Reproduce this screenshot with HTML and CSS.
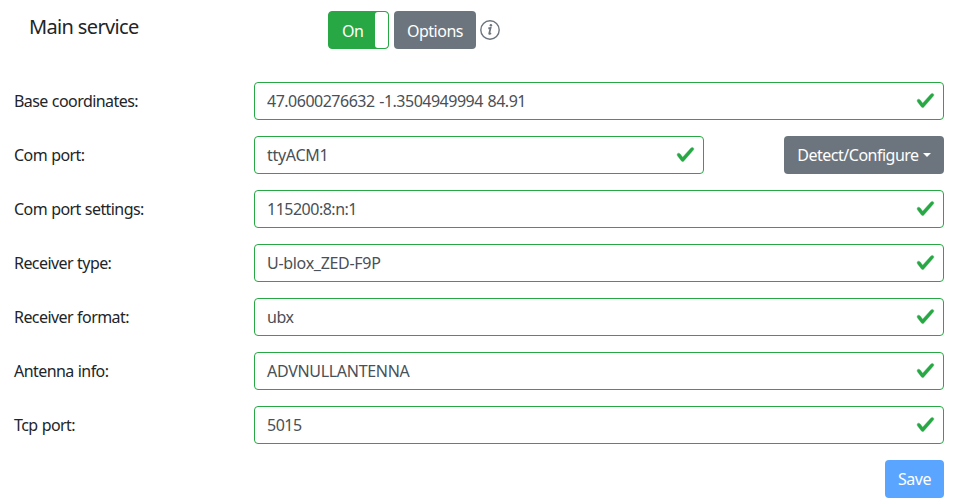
FILE: index.html
```html
<!DOCTYPE html>
<html lang="en">
<head>
<meta charset="utf-8">
<title>Main service</title>
<link rel="stylesheet" href="styles.css">
</head>
<body>
<header class="header">
  <h1 class="title">Main service</h1>
  <div class="toggle"><span class="toggle-on">On</span><span class="toggle-handle"></span></div>
  <button class="btn options">Options</button>
  <svg class="info" viewBox="0 0 20 20"><circle cx="10" cy="10" r="9.2"/><path class="stem" d="M8.3 8.4l2.3-.5-1.4 5.6q-.1 1.1 1.9-.2"/><circle class="dot" cx="10.9" cy="5.3" r="1.25"/></svg>
</header>
<main class="form">
  <div class="row"><label>Base coordinates:</label><div class="field"><span class="coords">47.0600276632 -1.3504949994 84.91</span><svg class="check" viewBox="0 0 8 8"><path d="M2.3 6.73L.6 4.53c-.4-1.04.46-1.4 1.1-.8l1.1 1.4 3.4-3.8c.6-.63 1.6-.27 1.2.7l-4 4.6c-.43.5-.8.4-1.1.1z"/></svg></div></div>
  <div class="row"><label>Com port:</label><div class="field short"><span class="wide">ttyACM1</span><svg class="check" viewBox="0 0 8 8"><path d="M2.3 6.73L.6 4.53c-.4-1.04.46-1.4 1.1-.8l1.1 1.4 3.4-3.8c.6-.63 1.6-.27 1.2.7l-4 4.6c-.43.5-.8.4-1.1.1z"/></svg></div><button class="btn detect">Detect/Configure<i class="caret"></i></button></div>
  <div class="row"><label>Com port settings:</label><div class="field"><span>115200:8:n:1</span><svg class="check" viewBox="0 0 8 8"><path d="M2.3 6.73L.6 4.53c-.4-1.04.46-1.4 1.1-.8l1.1 1.4 3.4-3.8c.6-.63 1.6-.27 1.2.7l-4 4.6c-.43.5-.8.4-1.1.1z"/></svg></div></div>
  <div class="row"><label>Receiver type:</label><div class="field"><span class="wide">U-blox_ZED-F9P</span><svg class="check" viewBox="0 0 8 8"><path d="M2.3 6.73L.6 4.53c-.4-1.04.46-1.4 1.1-.8l1.1 1.4 3.4-3.8c.6-.63 1.6-.27 1.2.7l-4 4.6c-.43.5-.8.4-1.1.1z"/></svg></div></div>
  <div class="row"><label>Receiver format:</label><div class="field"><span>ubx</span><svg class="check" viewBox="0 0 8 8"><path d="M2.3 6.73L.6 4.53c-.4-1.04.46-1.4 1.1-.8l1.1 1.4 3.4-3.8c.6-.63 1.6-.27 1.2.7l-4 4.6c-.43.5-.8.4-1.1.1z"/></svg></div></div>
  <div class="row"><label>Antenna info:</label><div class="field"><span class="wide">ADVNULLANTENNA</span><svg class="check" viewBox="0 0 8 8"><path d="M2.3 6.73L.6 4.53c-.4-1.04.46-1.4 1.1-.8l1.1 1.4 3.4-3.8c.6-.63 1.6-.27 1.2.7l-4 4.6c-.43.5-.8.4-1.1.1z"/></svg></div></div>
  <div class="row"><label>Tcp port:</label><div class="field"><span>5015</span><svg class="check" viewBox="0 0 8 8"><path d="M2.3 6.73L.6 4.53c-.4-1.04.46-1.4 1.1-.8l1.1 1.4 3.4-3.8c.6-.63 1.6-.27 1.2.7l-4 4.6c-.43.5-.8.4-1.1.1z"/></svg></div></div>
  <button class="btn save">Save</button>
</main>
</body>
</html>
```
FILE: styles.css
```css
* { box-sizing: border-box; }
body { margin: 0; background: #fff; color: #212529; font: 16px/24px "Noto Sans", "Open Sans", sans-serif; letter-spacing: -0.5px; overflow: hidden; }
.header { display: flex; padding: 11px 0 0 29px; height: 82px; }
.title { margin: 4px 0 0; width: 299px; font-size: 20px; line-height: 24px; font-weight: 400; letter-spacing: -0.65px; }
.toggle { display: flex; width: 61px; height: 38px; border: 1px solid #28a745; border-radius: 4px; overflow: hidden; background: #28a745; color: #fff; }
.toggle-on { width: 46px; padding: 7px 0 0 13px; }
.toggle-handle { flex: 1; border-radius: 3px; background: #fff; }
.btn { height: 38px; padding: 0; border: 0; border-radius: 4px; background: #6c757d; color: #fff; font: inherit; letter-spacing: inherit; white-space: nowrap; }
.options { width: 82px; margin-left: 5px; padding-top: 1px; }
.info { width: 20px; height: 20px; margin: 9px 0 0 4px; fill: none; stroke: #6c757d; stroke-width: 1.4; }
.info .stem { stroke-width: 1.7; }
.info .dot { fill: #6c757d; stroke: none; }
.form { display: flex; flex-direction: column; gap: 16px; padding: 0 13px 0 14px; }
.row { display: flex; align-items: center; height: 38px; }
.row label { width: 240px; flex: none; letter-spacing: -0.57px; word-spacing: 0.5px; }
.field { display: flex; flex: 1; align-items: center; justify-content: space-between; height: 38px; padding: 0 8px 0 12px; border: 1px solid #28a745; border-radius: 4px; color: #495057; }
.short { flex: none; width: 450px; }
.coords { word-spacing: 1px; }
.wide { letter-spacing: -0.3px; }
.check { width: 19px; height: 19px; margin-top: -1px; fill: #28a745; stroke: #28a745; stroke-width: 0.15; }
.detect { width: 160px; margin-left: auto; }
.caret { display: inline-block; margin-left: 4px; vertical-align: 4px; border: 4.8px solid transparent; border-top-color: #fff; border-bottom: 0; }
.save { align-self: flex-end; width: 59px; background: #5aa5ff; }
```
